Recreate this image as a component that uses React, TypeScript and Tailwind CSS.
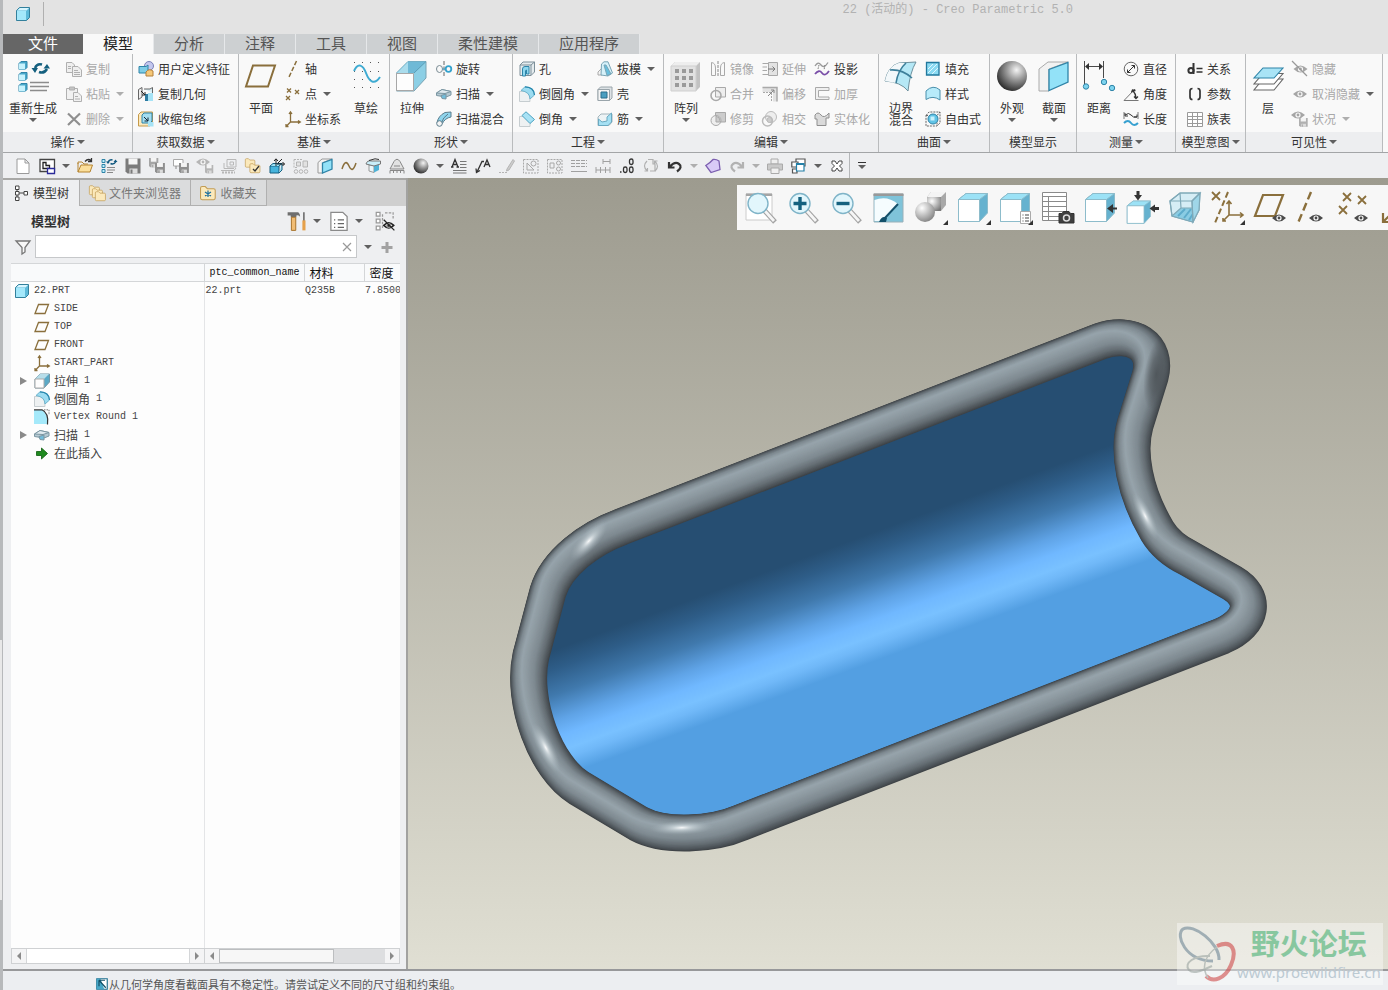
import React from "react";
import clsx from "clsx";

const BLUE = "#2f84a8";
const SKY = "#a6e3f6";
const GOLD = "#8a6f3c";
const GREY = "#a9a9a9";
const DARK = "#4a4a4a";

const eye = (x: number, y: number, color: string) => (
    <g transform={`translate(${x} ${y})`}>
        <path d="M-7 0Q0 -7 7 0Q0 7 -7 0Z" fill={color} />
        <circle r="2.6" fill="#f8f8f8" />
        <circle r="1.4" fill={color} />
    </g>
);

const floppy = (x: number, y: number, s: number, color: string) => (
    <g transform={`translate(${x} ${y}) scale(${s})`}>
        <path d="M0 0H15V15H2L0 13Z" fill={color} />
        <path d="M3 0H12V6H3Z" fill="#f4f4f4" />
        <path d="M4 10H12V15H4Z" fill="#dcdcdc" />
        <path d="M5 11H7V15H5Z" fill={color} />
    </g>
);

const folder = (x: number, y: number, s: number) => (
    <path transform={`translate(${x} ${y}) scale(${s})`} d="M.5 2.5Q.5 1 2 1H5L7 3H13Q14.500 3 14.500 4.500V12Q14.500 13.500 13 13.500H2Q.5 13.500 .5 12Z" fill="#fbe9bb" stroke="#c29c55" />
);

const cross = (x: number, y: number, r: number) => (
    <path d={`M${x - r} ${y - r}l${2 * r} ${2 * r}M${x + r} ${y - r}l${-2 * r} ${2 * r}`} stroke={GOLD} strokeWidth={r > 3 ? 1.8 : 1.3} />
);

// 16 x 16 drawings
const small: Record<string, React.ReactNode> = {
    cube: <g stroke="#33809c"><path d="M1.500 4.500L4.500 1.500H14.500V11.500L11.500 14.500H1.500Z" fill="#5db9d9" /><path d="M2 5H11V14H2Z" fill="#a4e8fb" stroke="none" /><path d="M2 4.500L5 2H14L11.500 4.500Z" fill="#d7f6ff" stroke="none" /></g>,
    copy: <g stroke="#b0b0b0" fill="#efefef"><path d="M.5 1.500H6L8.500 4V11.500H.5Z" /><path d="M6.500 5.500H12L15.500 9V15.500H6.500Z" /><path d="M8 9.500H12M8 11.500H14M8 13.500H14M2 5.500H5M2 7.500H5" /></g>,
    paste: <g stroke="#b0b0b0" fill="#f1f1f1"><path d="M.5 2.500H11.500V13.500H.5Z" /><path d="M3.500 1H8.500V4H3.500Z" fill="#c4c4c4" /><path d="M7.500 6.500H12L15.500 10V15.500H7.500Z" /><path d="M9 10.500H12M9 13H14" /></g>,
    remove: <path d="M2 2.500L14 14M14 2.500L2 14" stroke="#8f8f8f" strokeWidth="2.200" fill="none" />,
    udf: <g><circle cx="11" cy="5" r="4.500" fill="#c3c7ee" stroke="#7b82b8" /><path d="M1 5.500H8L10 4V10L8 12H1Z" fill="#7fcde6" stroke={BLUE} /><path d="M8 15V11Q11 7 15 10V15Z" fill="#f6c878" stroke="#b5803a" /></g>,
    copygeom: <g><path d="M.5 3.500L4 1.500V11L.5 13.500Z" stroke="#666" fill="#eee" /><path d="M6 3H12L14.500 1.500V7" fill="#d7eef5" stroke="#666" /><path d="M7 8H10V15H7Z" fill="#2d7ba1" /><path d="M10 7H15V15H10Z" fill={SKY} /><path d="M3 5L7 9M7 6V9H4" stroke="#222" fill="none" /></g>,
    shrink: <g><path d="M.5 3.500L3 1H14.500V12L12 15H.5Z" fill="#fbe9be" stroke="#c59a4a" /><path d="M4 4L6 2H14V10L12 12H4Z" fill="#a4def0" stroke={BLUE} /><path d="M6 6L10 10M10 6.500V10H6.500" stroke="#123" fill="none" /><path d="M10 11H15.500V15.500H10Z" fill={SKY} /></g>,
    axis: <path d="M11.500 0L4 16" stroke={GOLD} strokeWidth="1.500" strokeDasharray="4.500 2" fill="none" />,
    points: <g>{cross(4, 4.500, 2)}{cross(12, 6, 2)}{cross(3, 12, 2)}</g>,
    csys: <path d="M5.500 1V11H15M5.500 11L1 15.500M4 3L5.500 .8L7 3M13 9.500L15.300 11L13 12.500M1 13V15.500H3.500" stroke={GOLD} strokeWidth="1.300" fill="none" />,
    revolve: <g fill="none"><ellipse cx="3.500" cy="8" rx="3" ry="3.500" stroke="#7a8b93" /><circle cx="12.500" cy="8" r="2.800" stroke="#35a2cd" strokeWidth="1.800" /><path d="M8 0V16" stroke="#666" strokeDasharray="4 1.500" /><path d="M6.500 8H9.500" stroke="#35a2cd" /></g>,
    sweep: <g stroke="#7b96a2"><path d="M.5 7L6 3.500L15 5.500V9L10 11L.5 9.500Z" fill="#b5c9d2" /><path d="M.5 7L6 3.500L15 5.500L9 7.500Z" fill="#dfeaef" /><path d="M5 9.500L10 8V13L6 12.500Z" fill="#72bddb" /></g>,
    sweepblend: <g stroke="#5c7d8c"><path d="M1 12Q2 5 9 1.500L15 1V6Q9 7 6 13Z" fill="#8ed4ec" /><path d="M5 13Q7 6 12 3" fill="none" /><ellipse cx="3.500" cy="12.500" rx="2.800" ry="2.800" fill="#f4f4f4" /></g>,
    hole: <g stroke="#7c8f99"><path d="M1 4L4 1H15.500V11L12 14.500H1Z" fill="#e4ebee" /><path d="M12 4V14.500M1 4H12L15.500 1" fill="none" /><path d="M3.500 15V8Q3.500 5.500 6 5.500H10V13H7.500V9Q6.500 9 6.500 10V15Z" fill="#8fd8ef" stroke={BLUE} /></g>,
    round: <g><path d="M.5 5.500L6 5Q11 6 11 15.500H.5Z" fill="#eef1f2" stroke="#c6cdd0" /><path d="M6 .8Q15 1 15.500 9L11 13Q11 6 2 4.500Z" fill="#9cdcf1" stroke="#6db3cc" /><path d="M6 .8Q15 1 15.500 9" fill="none" stroke="#2888ae" strokeWidth="1.300" /></g>,
    chamfer: <g><path d="M.5 5.500H6L11 10V15.500H.5Z" fill="#eef1f2" stroke="#c6cdd0" /><path d="M7 .8L15.500 8.500L11 12.500L3 4.500Z" fill="#a8e2f5" stroke="#4ca3c2" /></g>,
    draft: <g stroke="#7aa5b6"><path d="M1 11L5 7V14H1Z" fill="#f3f3f3" stroke="#aaa" /><path d="M4.500 3L7 .8H11L15.500 12L11 15L4 14Z" fill="#d6f1f9" /><path d="M7 4H9L14 13L10 14.500Z" fill="#66bfde" /></g>,
    shell: <g stroke="#9aa5ab"><path d="M1 3.500L3.500 1H15V12L12.500 14.500H1Z" fill="#dde2e5" /><path d="M1 3.500H12.500V14.500H1Z" fill="#f5f5f5" /><path d="M4 6H10V12H4Z" fill="#4a9ec0" stroke="#2b6f8c" /></g>,
    rib: <g stroke="#6aa9c1"><path d="M1 6L4 3H15V11L12 14.500H1Z" fill="#edf3f5" stroke="#a3b4bb" /><path d="M1.500 8V14.500H11L14.500 11V2L10 6V10L5 11Z" fill="#a5e0f3" /></g>,
    mirror: <g fill="none" stroke={GREY}><path d="M1.500 1.500Q5.500 2 5.500 7V14.500H1.500Z" /><path d="M14.500 1.500Q10.500 2 10.500 7V14.500H14.500Z" /><path d="M8 0V16" stroke="#888" strokeDasharray="3 1" /></g>,
    merge: <g stroke={GREY} fill="#eee"><path d="M5.500 1.500H15.500V11H5.500Z" /><circle cx="6" cy="9.500" r="5" fill="none" strokeWidth="1.600" /></g>,
    trim: <g stroke={GREY}><path d="M5.500 1.500H15.500V11H5.500Z" fill="#ccc" /><circle cx="6" cy="9.500" r="5" fill="#eee" /><path d="M6 5Q10 6 10.500 11H6Z" fill="#ccc" /></g>,
    extend: <g stroke={GREY}><path d="M.5 2.500H6M.5 6H5M.5 9.500H5M.5 13.500H6" /><path d="M6.500 1.500H15.500V14.500H6.500Z" fill="#e3e3e3" /><path d="M6 8H13M10.500 5.500L13 8L10.500 10.500" stroke="#777" fill="none" /></g>,
    offset: <g stroke={GREY} fill="none"><path d="M.5 1.500H15V15.500H11V6H.5Z" fill="#e2e2e2" stroke="none" /><path d="M.5 1.500H15V15.500" strokeWidth="1.500" /><path d="M1 6.500H9.500V15" strokeDasharray="2 1" /><path d="M6 10L12 4M9 4H12V7" stroke="#888" /></g>,
    intersect: <g stroke="#bbb"><circle cx="9" cy="6" r="5.500" fill="#eee" /><circle cx="5.500" cy="10" r="5" fill="none" strokeWidth="1.500" /><circle cx="7.500" cy="9" r="2.500" fill="#ccc" /></g>,
    project: <g fill="none"><path d="M1 5Q4 0 7 4T14 1.500" stroke="#999" strokeWidth="1.300" /><path d="M1 13Q5 8 8 12T15 10" stroke="#7a4fa8" strokeWidth="1.800" /><path d="M5 4L4 8M11 4L10 9" stroke="#777" strokeDasharray="1.500 1" /></g>,
    thicken: <path d="M15 1.500H1.500V13.500H15V11H4.500V4.500H15Z" fill="#f0f0f0" stroke={GREY} />,
    solidify: <path d="M1 4Q4 0 7 4T15 2V7H12V14.500H3V8H1Z" fill="#dadada" stroke="#8f8f8f" />,
    fill: <g><path d="M1.500 1.500H14V14H1.500Z" fill="#8bdaf2" stroke="#22789d" strokeWidth="1.300" /><path d="M3 12L12 3M3 8L8 3M7 13L13 7" stroke="#dff7ff" /></g>,
    style: <path d="M1 5Q8 -2 15 4V14Q8 9 1 13.500Z" fill="#b7ebfa" stroke="#4a8fab" />,
    freestyle: <g fill="none"><path d="M1 4.500L4 1H15V12L12 15H1ZM1 4.500H12V15M12 4.500L15 1" stroke="#666" strokeDasharray="2 1" /><circle cx="8" cy="8" r="5" fill="#62c4e6" stroke={BLUE} /><path d="M5.500 5.500H9.500V9.500H5.500Z" fill="#c8f1fc" /></g>,
    diameter: <g fill="none" stroke="#666"><circle cx="8" cy="8" r="6.800" /><path d="M4.500 11.500L11.500 4.500M8.500 4.500H11.500V7.500M4.500 8.500V11.500H7.500" stroke="#333" /></g>,
    angle: <g fill="none" stroke="#777"><path d="M15.500 14.500H1L12 3" /><path d="M9.500 4Q13 8 13 12M8.500 6.500L9.500 4L12.500 4.500M11 10.500L13 12.500L15 10.500" stroke="#333" strokeWidth="1.300" /></g>,
    length: <g fill="none"><path d="M1 1V8M15 1V8" stroke="#777" /><path d="M2 4Q6 1 8 4T14 6M2 2V5H5M14 3.500V6H11" stroke="#333" /><path d="M1 12Q5 8 8 12T15 12" stroke="#36a0d0" strokeWidth="2" /></g>,
    relation: <g fill="none" stroke="#333" strokeWidth="2"><path d="M6.500 2V13" /><circle cx="4" cy="9.500" r="2.600" /><path d="M9.500 7.500H15.500M9.500 11H15.500" strokeWidth="1.500" /></g>,
    params: <path d="M5.500 2.500Q3 2.500 3 5V11Q3 13.500 5.500 13.500M10.500 2.500Q13 2.500 13 5V11Q13 13.500 10.500 13.500" fill="none" stroke="#333" strokeWidth="1.700" />,
    family: <g fill="none" stroke="#9a9a9a"><path d="M.5 1.500H15.500V15.500H.5Z" fill="#fff" /><path d="M.5 5.500H15.500M.5 8.500H15.500M.5 12.500H15.500M5.500 1.500V15.500M10.500 1.500V15.500" /></g>,
    hide: <g>{eye(8.500, 8, "#a5a5a5")}<path d="M0 0L15 15" stroke="#999" strokeWidth="1.300" /></g>,
    unhide: eye(8, 8, "#a5a5a5"),
    status: <g>{eye(6, 4, "#a5a5a5")}{floppy(7, 7, 0.58, "#b0b0b0")}</g>,
    newfile: <path d="M2 1H10L14 5V15.500H2ZM10 1V5H14" fill="#fff" stroke="#9a9a9a" />,
    window: <g fill="none" strokeWidth="1.300"><path d="M1 1.500H15.500V13.500H1Z" stroke="#444" fill="#fff" /><path d="M4 4.500H7V7.500H10.500V10.500H4Z" stroke="#222" /><path d="M8.500 10.500H15.500V15.500H8.500Z" stroke="#2b2b9a" fill="#fff" /></g>,
    open: <g><path d="M1 5V14H13L15.500 7H4L1 14" fill="#fbdf9c" stroke="#b58430" /><path d="M1 6V4H5L7 6H11" fill="none" stroke="#b58430" /><path d="M8 3.500Q11 0 14 2.500M14.500 0V3.500H11" fill="none" stroke="#333" strokeWidth="1.300" /></g>,
    regen: <g><path d="M1 1.500H4V4.500H1ZM1 6.500H4V9.500H1ZM1 11.500H4V14.500H1Z" fill="#bdeefb" stroke={BLUE} /><path d="M6 9.500H14M6 12H14M6 14.500H12" stroke="#888" /><path d="M7 4Q8.500 1 11.500 2M15 3.500Q13 7 9.500 5.500" fill="none" stroke="#135a80" strokeWidth="1.500" /><path d="M5 3.500H9L7 6ZM16.500 4H12.500L14.500 1.500Z" fill="#135a80" /></g>,
    save: floppy(0.5, 0.5, 1, "#7a7a7a"),
    saveas: <g>{floppy(0, 0, 0.62, "#a5a5a5")}{floppy(6, 5, 0.66, "#8f8f8f")}</g>,
    savecopy: <g><path d="M.5 1.500H10V8H.5Z" fill="#fff" stroke={GREY} /><path d="M3 8V11" stroke="#888" />{floppy(6, 5, 0.66, "#8f8f8f")}</g>,
    savestatus: <g>{eye(6, 4, "#b5b5b5")}{floppy(8, 7, 0.55, "#b5b5b5")}</g>,
    stamp: <g fill="none" stroke="#b8b8b8"><path d="M6 1.500H15V9H6ZM9 4H12.500V7H9ZM3 5V10.500H13" /><path d="M0 12.500H13L15 10" /><path d="M1 14.500H14" strokeWidth="2" strokeDasharray="2 1" /></g>,
    foldercheck: <g>{folder(0, 0, 0.68)}{folder(4.500, 5, 0.72)}<path d="M8 11L10 13L14 8" fill="none" stroke="#333" strokeWidth="1.300" /></g>,
    boxarrows: <g><path d="M1 8H10V15H1Z" fill="#46b4dc" stroke="#155f80" /><path d="M1 8L4 5.500H13L10 8M13 5.500V12L10 15" fill="#9be0f5" stroke="#155f80" /><path d="M7 8V1M5 3L7 .8L9 3M8 6H15.500M13.500 4L15.500 6L13.500 8M9 5L13 1" fill="none" stroke="#222" /></g>,
    greybox: <g fill="none" stroke="#b5b5b5"><path d="M1 1.500H10M1 1.500V9.500H4" strokeDasharray="2 1" /><path d="M3.500 4H7.500V8H3.500ZM10 3H14.500V9H10Z" fill="#e2e2e2" /><circle cx="3" cy="13.500" r="1.800" /><circle cx="8" cy="13.500" r="1.800" /><circle cx="13" cy="13.500" r="1.800" /></g>,
    section: <g stroke={BLUE}><path d="M1 4.500L5 1H15L6 4.500V15H1Z" fill="#f4f4f4" stroke="#999" /><path d="M5.500 5L15 1.500V11L5.500 15Z" fill="#93e2f8" strokeWidth="1.300" /></g>,
    curve: <path d="M1 11Q4.500 0 8 8T15 5" fill="none" stroke={GOLD} strokeWidth="1.500" />,
    cutbox: <g><path d="M4 7H9V14.500L4 13Z" fill="#e9f6fa" stroke="#999" /><path d="M9 7L14 5V12L9 14.500Z" fill="#4fb2d6" /><path d="M1 6Q2 2 7 3H15.500V6L9 8Z" fill="#c9eef9" stroke="#777" /><path d="M4 2.500L10 .8L14 1.500" stroke="#333" fill="none" /></g>,
    mass: <g stroke="#888"><path d="M5 3.500Q8 -1 11 3.500L15 11H1Z" fill="#e2e2e2" /><path d="M1 12.500H15V15.500M1 12.500V15.500M4.500 13V15M8 13V15M11.500 13V15" fill="none" /><path d="M5 8H11" /></g>,
    ball: <circle cx="8" cy="8" r="7.500" fill="url(#ballGrad)" />,
    note: <g><path d="M1 9L4 1.500L7 9M2 6.500H6M0 9H2.500M5.500 9H8" fill="none" stroke="#333" strokeWidth="1.300" /><path d="M9 3.500H15.500M9 6.500H15.500M9 9.500H15.500M2 12.500H15.500M2 15H15.500" stroke="#777" /></g>,
    leader: <g fill="none" stroke="#333" strokeWidth="1.300"><path d="M9 9L12 2L15 9M10 6.500H14" /><path d="M9 3.500H7L2 14M1 10.500L1.500 14.500L5 12.500" /></g>,
    pen: <g stroke="#b5b5b5"><path d="M0 14.500H9" strokeDasharray="2 1" /><path d="M8 11L14 1.500L15.500 3L10 12L7.500 13Z" fill="#ccc" /></g>,
    sketch1: <g fill="none" stroke="#a8a8a8"><path d="M.5 1.500H15V15H.5Z" strokeDasharray="2 1" /><path d="M4 5V12H11Z" /><circle cx="10.500" cy="5.500" r="2.500" /></g>,
    sketch2: <g fill="none" stroke="#a8a8a8"><path d="M.5 1.500H15V15H.5Z" strokeDasharray="2 1" /><path d="M3 5H7V10H3Z" /><circle cx="11.500" cy="5" r="2" /><circle cx="11.500" cy="11" r="2" /></g>,
    lines: <g stroke="#a0a0a0"><path d="M0 2.500H16M0 5.500H16M0 8.500H16" strokeDasharray="4 1" /><path d="M0 13.500H16" /></g>,
    dims: <path d="M1 9V15M5.500 9V15M10.500 9V15M15 9V15M1 12H15M8 1V6M15 1V6M8 3.500H15" fill="none" stroke="#a0a0a0" />,
    decimals: <g fill="none" stroke="#333" strokeWidth="1.300"><rect x="10.500" y="1" width="3.500" height="5.500" rx="1.700" /><rect x="4.500" y="9" width="3.500" height="5.500" rx="1.700" /><rect x="10.500" y="9" width="3.500" height="5.500" rx="1.700" /><path d="M1 14H2.500" /></g>,
    spin: <g fill="none" stroke="#b0b0b0" strokeWidth="1.200"><path d="M5 1.500H10V6H12V13H7" fill="#eee" /><path d="M4 3Q-1 8 4 12.500M12 3.500Q17 8 12 13M1.500 13H4.500V10M14.500 3H11.500V6" /></g>,
    undo: <path d="M3 8.500Q8 3 12 6T10 13.500M2 4V9.500H7.500" fill="none" stroke="#333" strokeWidth="2.200" />,
    redo: <path d="M13 8.500Q8 3 4 6T6 13.500M14 4V9.500H8.500" fill="none" stroke="#b2b2b2" strokeWidth="2.200" />,
    patch: <path d="M8 1.500Q11 1 14 3L15 11.500L6 14.500L.8 7.500Q5 5 8 1.500Z" fill="#d9cbf7" stroke="#7c5fb0" strokeWidth="1.300" />,
    printer: <g stroke="#aaa"><path d="M4 1H11V6H4Z" fill="#eee" /><path d="M.5 6H15.500V12H.5Z" fill="#c9c9c9" /><path d="M4 10H12V15.500H4Z" fill="#f0f0f0" /></g>,
    windows: <g fill="#fff" strokeWidth="1.200"><path d="M5 1H14V8H5Z" stroke="#555" /><path d="M.8 4H7V9H.8ZM1.500 11H6V15H1.500Z" stroke="#555" /><path d="M5.500 5.500H13V13H5.500Z" stroke="#2480a8" /><path d="M5.500 6H13" stroke="#2480a8" strokeWidth="2" /></g>,
    close: <path d="M3 3H6L8 6L10 3H13V5.500L10.500 8L13 10.500V13H10L8 10L6 13H3V10.500L5.500 8L3 5.500Z" fill="#fff" stroke="#444" />,
    tree: <g fill="none" stroke="#444"><path d="M2.500 1H6V4.500H2.500ZM2.500 6.500H6V10H2.500ZM2.500 12H6V15.500H2.500ZM11 6.500H14.500V10H11Z" fill="#fff" /><path d="M4 4.500V6.500M4 10V12M6 8H11" /></g>,
    hammer: <g><path d="M.5 1H9Q10.500 2 10.500 4.500Q9 3 7.500 3.500V5H3V3.500H.5Z" fill="#6f6f6f" /><path d="M3.500 5H7V15.500H3.500Z" fill="#f1bd74" stroke="#a8732c" strokeWidth=".8" /><path d="M13.500 1V8" stroke="#777" strokeWidth="1.400" /><path d="M12.300 7.500H14.800V15.500H12.300Z" fill="#e5a04a" /></g>,
    listdoc: <g fill="none" stroke="#8a8a8a"><path d="M1.500 1H11L14.500 4.500V15.500H1.500Z" fill="#fff" /><path d="M7 7H12M7 10H12M7 13H12M4 7H5M4 10H5M4 13H5" stroke="#666" /></g>,
    treehide: <g fill="none" stroke="#9a9a9a"><path d="M1 1H4V4H1ZM1 6.500H4V9.500H1ZM1 12H4V15H1Z" fill="#fff" /><path d="M8 1.500H14.500V7M6 2.500V14" strokeDasharray="2 1" /><path d="M7 11.500Q11 7.500 15 11.500Q11 15.500 7 11.500Z" fill="#fff" stroke="#222" strokeWidth="1.200" /><circle cx="11" cy="11.500" r="1.500" fill="#222" /><path d="M7 7L15.500 15.500" stroke="#222" /></g>,
    funnel: <path d="M1 2H15L10 8.500V13L7 15V8.500Z" fill="#f8f8f8" stroke="#777" strokeWidth="1.300" />,
    plus: <path d="M8 3V14M2.500 8.500H13.500" stroke="#a2a2a2" strokeWidth="3" />,
    folders: <g>{folder(0, 0, 0.72)}{folder(3, 3, 0.72)}{folder(6, 6, 0.72)}</g>,
    favorite: <g>{folder(0, 0.5, 1.05)}<path d="M8 5.500V12M5 7L11 11M11 7L5 11" stroke="#1b6fa0" strokeWidth="1.200" /></g>,
    plane: <path d="M4.500 3.500H14.500L11 12.500H1Z" fill="none" stroke={GOLD} strokeWidth="1.300" />,
    extrude: <g><path d="M1 6L6 1H15.500V9L10 15H1Z" fill="#5aa9c6" stroke="#7296a5" /><path d="M1 6L6 1H15L10 6Z" fill="#b7dde9" /><path d="M1 6H10V15H1Z" fill="#fdfdfd" stroke="#aaa" /></g>,
    vertex: <g><path d="M0 1H8Q14 4 13 15H0Z" fill="#a5e9fa" /><path d="M0 .8H8Q15 4 13.500 15.500" fill="none" stroke="#333" strokeWidth="1.200" /><path d="M10 .8H15V6" fill="none" stroke="#777" strokeDasharray="1.500 1" /></g>,
    insert: <path d="M2.500 6.500H7.500V3L13.500 8.500L7.500 14V10.500H2.500Z" fill="#1f8a1f" stroke="#0d5c0d" strokeWidth=".8" />,
    message: <g><path d="M1 1H15V15H1Z" fill="#fff" stroke="#1d6f8e" strokeWidth="1.500" /><path d="M1 1H6L11 15H1Z" fill="#46a6c6" /><path d="M4 3H12M4 3V11M4 3L13 13" stroke="#134f66" strokeWidth="1.600" fill="none" /></g>,
};

const magnifier = (
    <g><path d="M19.500 19.500L30 31" stroke="#a3a3a3" strokeWidth="5" /><path d="M20 20L29 30" stroke="#f6f6f6" strokeWidth="2.800" /><circle cx="13" cy="12.500" r="10" fill="#e2f6fc" stroke="#7fb4c8" strokeWidth="1.400" /></g>
);
const bigCube = (
    <g stroke="#8dbccb"><path d="M1.500 8.500L9 2.500H30.500V22L22.500 30.500H1.500Z" fill="#66b2cf" /><path d="M1.500 8.500L9 2.500H30.500L22.500 8.500Z" fill="#9ce2f6" /><path d="M1.500 8.500H22.500V30.500H1.500Z" fill="#fff" /></g>
);
const corner = <path d="M34 29V34H29Z" fill="#333" />;

// 34 x 34 drawings
const large: Record<string, React.ReactNode> = {
    regenerate: <g><path d="M3 3.500L5 1.500H11V7.500L9 9.500H3ZM3 14.500L5 12.500H11V18.500L9 20.500H3ZM3 25.500L5 23.500H11V29.500L9 31.500H3Z" fill="#48a9cb" stroke={BLUE} /><path d="M3 3.500H9V9.500H3ZM3 14.500H9V20.500H3ZM3 25.500H9V31.500H3Z" fill="#c6f2fd" /><path d="M14 22.500H33M14 26.500H33M14 30.500H31" stroke="#8c8c8c" strokeWidth="1.400" /><path d="M19 8Q21 3 26 4.500M31 9Q28 14 23 12" fill="none" stroke="#15607f" strokeWidth="2.500" /><path d="M15.500 8H22L19 13ZM34 8.500H27.500L31 4Z" fill="#15607f" /></g>,
    plane: <path d="M9 5.500H31L24 26.500H2Z" fill="none" stroke={GOLD} strokeWidth="2" />,
    sketch: <g><path d="M5 2.500H31M5 11.500H31M5 19.500H31M5 27.500H31" stroke="#555" strokeDasharray="1 7" /><path d="M5 11C9 2 14 5 17 13S25 26 31 17" fill="none" stroke="#3eabd2" strokeWidth="2" /></g>,
    extrude: <g><path d="M1.500 13L13 1.500H31V18L19 31H1.500Z" fill="#8ccfe5" stroke="#79a3b3" /><path d="M1.500 13L13 1.500H31L19 13Z" fill="#6fb9d6" /><path d="M13 2L13 13H2Z" fill="#aadcec" /><path d="M19 13L31 1.500" stroke="#5b9db6" /><path d="M1.500 13.500H18.500V30.500H1.500Z" fill="#fdfdfd" stroke="#a7a7a7" /></g>,
    pattern: <g><path d="M2 6L6 2H31V27L27 31H2Z" fill="#c2c2c2" /><path d="M2 6L6 2H31L27 6Z" fill="#eee" /><path d="M2 6H27V31H2Z" fill="#e2e2e2" stroke="#cfcfcf" />{[9, 16, 23].map((y) => [6, 13, 20].map((x) => <path key={`${x}-${y}`} d={`M${x} ${y}h4v4h-4z`} fill="#9a9a9a" />))}</g>,
    boundary: <g stroke="#6d909d"><path d="M1 21Q4 6 15 3L32 2Q26 12 24 31Q17 22 1 21Z" fill="#b5e8f6" /><path d="M1 21Q4 6 15 3L21 3Q14 9 12 23Z" fill="#f3f8fa" stroke="none" /><path d="M6 10Q18 9 28 18M22 3Q14 10 12 23" fill="none" stroke="#3d7f9a" strokeWidth="1.600" /></g>,
    appearance: <circle cx="17" cy="16" r="15" fill="url(#ballGrad)" />,
    section: <g><path d="M2 9L11 2H31L12 9V31H2Z" fill="#f2f2f2" stroke="#aaa" /><path d="M12 9.500L31 2.500V22L12 30.500Z" fill="#93e2f8" stroke={BLUE} strokeWidth="1.300" /></g>,
    distance: <g><path d="M2.500 1V24M21.500 1V18M4 6.500H20" stroke={DARK} /><path d="M7 3L3 6.500L7 10ZM17 3L21 6.500L17 10Z" fill="#333" /><g fill="#7dd3ee" stroke={BLUE}><circle cx="4" cy="26.500" r="2.700" /><circle cx="22" cy="22" r="2.700" /><circle cx="30" cy="28" r="2.700" /></g></g>,
    layer: <g stroke="#666" strokeWidth="1.100"><path d="M12 19H32L23 30H3Z" fill="#fff" /><path d="M12 13.500H32L23 24H3Z" fill="#fff" /><path d="M12 8H32L23 18H3Z" fill="#a9e4f6" stroke={BLUE} /></g>,
    refit: <g><path d="M1 3H27V29H1Z" fill="#fff" stroke="#ccc" /><path d="M1 2.500H27V5H1Z" fill="#a5a5a5" />{magnifier}</g>,
    zoomin: <g>{magnifier}<path d="M13 6V19M6.500 12.500H19.500" stroke="#14617f" strokeWidth="3.400" /></g>,
    zoomout: <g>{magnifier}<path d="M6.500 12.500H19.500" stroke="#14617f" strokeWidth="3.400" /></g>,
    repaint: <g><path d="M2 3H31V31H2Z" fill="#7fc3d9" stroke="#9ab0b8" /><path d="M1.500 2.500H31.500V5H1.500Z" fill="#999" /><path d="M2.500 9Q15 4 26 13L11 30H2.500Z" fill="#f5fcfe" /><path d="M26 13L12 28" stroke="#14506a" strokeWidth="2" /><path d="M7 31Q10 24 15 27L14 31Z" fill="#14506a" /></g>,
    displaystyle: <g><path d="M13 6L17 1H32V14L27 20H13Z" fill="#a8a8a8" /><path d="M13 6L17 1H32L27 6Z" fill="#f4f4f4" /><path d="M13 6H27V20H13Z" fill="url(#silverGrad)" /><circle cx="11" cy="21" r="10" fill="url(#silverGrad)" />{corner}</g>,
    orient: <g>{bigCube}{corner}</g>,
    viewmanager: <g>{bigCube}<path d="M21.500 20.500H31.500V32.500H21.500Z" fill="#fff" stroke="#aaa" /><path d="M23.500 24H24.500M26 24H30M23.500 27H24.500M26 27H30M23.500 30H24.500M26 30H30" stroke="#444" />{corner}</g>,
    camera: <g fill="none" stroke="#8a8a8a"><path d="M1.500 1.500H25.500V29.500H1.500Z" fill="#fff" /><path d="M1.500 5.500H25.500M1.500 10.500H25.500M1.500 15.500H25.500M1.500 20.500H25.500M1.500 25.500H25.500M7.500 5.500V29.500" /><path d="M18 22.500H21L22.500 20.500H28L29.500 22.500H33V32H18Z" fill="#3f3f3f" stroke="#333" /><circle cx="25.500" cy="27" r="3" stroke="#ddd" strokeWidth="1.500" /></g>,
    front: <g>{bigCube}<path d="M33 17.500H27" stroke="#333" strokeWidth="2" /><path d="M29 13L23 17.500L29 22Z" fill="#333" /></g>,
    topfront: <g><g transform="translate(0 8) scale(.8)">{bigCube}</g><path d="M12 0V5M33 17.500H28" stroke="#333" strokeWidth="3" /><path d="M8 4H16L12 9.500ZM29 13.500L23.500 17.500L29 21.500Z" fill="#333" /></g>,
    perspective: <g stroke="#7fa9b8" strokeWidth="1.200"><path d="M2 10L12 2H32L31 19L25 31L4 25Z" fill="#d6edf5" /><path d="M4 25L13 17H31L25 31Z" fill="#8accE3" stroke="none" /><path d="M10 25L17 18M16 27L23 18M21 29L28 18" stroke="#5eaccb" strokeWidth="2" /><path d="M24 10L32 2L31 19L25 31Z" fill="#9fd6e8" /><path d="M12 2L13 17L4 25M13 17H24M2 10L4 25L25 31L24 10ZL12 2H32L24 10" fill="none" /></g>,
    datumall: <g fill="none" stroke={GOLD} strokeWidth="1.600">{cross(5, 5, 4)}<path d="M17 1L4 32" strokeDasharray="6 3" strokeWidth="2" /><path d="M18 11V24H31M18 24L12 30M15.500 13L18 10L20.500 13M29 21.500L32 24L29 26.500M12 27V30H15" /><path d="M34 29V34H29Z" fill="#333" stroke="none" /></g>,
    planevis: <g><path d="M10 4H30L22 25H2Z" fill="none" stroke={GOLD} strokeWidth="2.200" />{eye(26, 27, "#4a4a4a")}</g>,
    axisvis: <g><path d="M16 1L3 32" stroke={GOLD} strokeWidth="2.400" strokeDasharray="8 4" />{eye(21, 27, "#4a4a4a")}</g>,
    pointvis: <g>{cross(9, 6, 4)}{cross(24, 9, 4)}{cross(5, 19, 4)}{eye(23, 27, "#4a4a4a")}</g>,
    csysvis: <path d="M22 1V12L3 31M3 22V31H12" fill="none" stroke={GOLD} strokeWidth="2.200" />,
};

function Icon({ name, big = false }: { name: string; big?: boolean }) {
    return (
        <svg
            viewBox={big ? "0 0 34 34" : "0 0 16 16"}
            className={clsx("shrink-0 overflow-visible", big ? "size-[34px]" : "size-4")}
            fill="none"
            aria-hidden="true"
        >
            {big ? large[name] : small[name]}
        </svg>
    );
}

function Arrow({ muted = false }: { muted?: boolean }) {
    return (
        <svg viewBox="0 0 8 4" className={clsx("w-2 h-1 shrink-0", muted ? "text-[#aeaeae]" : "text-[#606060]")} aria-hidden="true">
            <path d="M0 0H8L4 4Z" fill="currentColor" />
        </svg>
    );
}

type Tool = { icon: string; label: string; off?: boolean; menu?: boolean; menuOn?: boolean };

function BigTool({ icon, label, menu, className = "w-11" }: Tool & { className?: string }) {
    return (
        <button type="button" className={clsx("flex flex-col items-center shrink-0 pt-1", className)}>
            <Icon name={icon} big />
            <span className="mt-2 leading-3 text-center whitespace-pre-line">{label}</span>
            {menu && <span className="mt-1 flex"><Arrow /></span>}
        </button>
    );
}

function ToolColumn({ tools, className }: { tools: Tool[]; className?: string }) {
    return (
        <div className={clsx("flex flex-col shrink-0", className)}>
            {tools.map((t) => (
                <button key={t.label} type="button" className={clsx("h-[25px] flex items-center gap-1 whitespace-nowrap", t.off && "text-[#a8a8a8]")}>
                    <Icon name={t.icon} />
                    <span>{t.label}</span>
                    {t.menu && <span className="ml-0.5 flex"><Arrow muted={t.off && !t.menuOn} /></span>}
                </button>
            ))}
        </div>
    );
}

function Group({ label, menu = true, className, children }: { label: string; menu?: boolean; className: string; children: React.ReactNode }) {
    return (
        <section className={clsx("shrink-0 flex flex-col border-r border-[#b9bbbd]", className)}>
            <div className="h-[78px] flex pt-0.5">{children}</div>
            <button type="button" className="h-5 bg-[#edeef0] flex items-center justify-center gap-0.5 whitespace-nowrap">
                {label}
                {menu && <Arrow />}
            </button>
        </section>
    );
}

const tabs = ["分析", "注释", "工具", "视图", "柔性建模", "应用程序"];

function RibbonTabs() {
    return (
        <nav className="h-5 flex text-[15px] leading-[18px] text-[#555]">
            <button type="button" className="w-20 bg-[#666] text-white flex justify-center">文件</button>
            <button type="button" className="px-5 bg-[#f9f9f9] text-[#222] border-r border-[#e6e8ea] flex">模型</button>
            {tabs.map((t) => (
                <button key={t} type="button" className="px-5 bg-[#cdd0d2] border-r border-[#e6e8ea] flex">{t}</button>
            ))}
        </nav>
    );
}

function Ribbon() {
    return (
        <div className="flex bg-[#f9f9f9] border-b border-[#a3a5a7] text-xs text-[#333] overflow-hidden">
            <Group label="操作" className="w-[130px]">
                <BigTool icon="regenerate" label="重新生成" menu className="w-[60px]" />
                <ToolColumn className="pl-[3px]" tools={[
                    { icon: "copy", label: "复制", off: true },
                    { icon: "paste", label: "粘贴", off: true, menu: true },
                    { icon: "remove", label: "删除", off: true, menu: true },
                ]} />
            </Group>
            <Group label="获取数据" className="w-[106px]">
                <ToolColumn className="pl-[5px]" tools={[
                    { icon: "udf", label: "用户定义特征" },
                    { icon: "copygeom", label: "复制几何" },
                    { icon: "shrink", label: "收缩包络" },
                ]} />
            </Group>
            <Group label="基准" className="w-[151px]">
                <BigTool icon="plane" label="平面" />
                <ToolColumn className="w-[59px] pl-0.5" tools={[
                    { icon: "axis", label: "轴" },
                    { icon: "points", label: "点", menu: true },
                    { icon: "csys", label: "坐标系" },
                ]} />
                <BigTool icon="sketch" label="草绘" className="w-12" />
            </Group>
            <Group label="形状" className="w-[123px]">
                <BigTool icon="extrude" label="拉伸" />
                <ToolColumn className="pl-0.5" tools={[
                    { icon: "revolve", label: "旋转" },
                    { icon: "sweep", label: "扫描", menu: true },
                    { icon: "sweepblend", label: "扫描混合" },
                ]} />
            </Group>
            <Group label="工程" className="w-[151px]">
                <ToolColumn className="w-[84px] pl-1.5" tools={[
                    { icon: "hole", label: "孔" },
                    { icon: "round", label: "倒圆角", menu: true },
                    { icon: "chamfer", label: "倒角", menu: true },
                ]} />
                <ToolColumn tools={[
                    { icon: "draft", label: "拔模", menu: true },
                    { icon: "shell", label: "壳" },
                    { icon: "rib", label: "筋", menu: true },
                ]} />
            </Group>
            <Group label="编辑" className="w-[215px]">
                <BigTool icon="pattern" label="阵列" menu />
                <ToolColumn className="w-[54px] pl-0.5" tools={[
                    { icon: "mirror", label: "镜像", off: true },
                    { icon: "merge", label: "合并", off: true },
                    { icon: "trim", label: "修剪", off: true },
                ]} />
                <ToolColumn className="w-[52px]" tools={[
                    { icon: "extend", label: "延伸", off: true },
                    { icon: "offset", label: "偏移", off: true },
                    { icon: "intersect", label: "相交", off: true },
                ]} />
                <ToolColumn tools={[
                    { icon: "project", label: "投影" },
                    { icon: "thicken", label: "加厚", off: true },
                    { icon: "solidify", label: "实体化", off: true },
                ]} />
            </Group>
            <Group label="曲面" className="w-[111px]">
                <BigTool icon="boundary" label={"边界\n混合"} />
                <ToolColumn className="pl-0.5" tools={[
                    { icon: "fill", label: "填充" },
                    { icon: "style", label: "样式" },
                    { icon: "freestyle", label: "自由式" },
                ]} />
            </Group>
            <Group label="模型显示" menu={false} className="w-[87px]">
                <BigTool icon="appearance" label="外观" menu />
                <BigTool icon="section" label="截面" menu className="w-10" />
            </Group>
            <Group label="测量" className="w-[99px]">
                <BigTool icon="distance" label="距离" />
                <ToolColumn className="pl-0.5" tools={[
                    { icon: "diameter", label: "直径" },
                    { icon: "angle", label: "角度" },
                    { icon: "length", label: "长度" },
                ]} />
            </Group>
            <Group label="模型意图" className="w-[70px]">
                <ToolColumn className="pl-[11px]" tools={[
                    { icon: "relation", label: "关系" },
                    { icon: "params", label: "参数" },
                    { icon: "family", label: "族表" },
                ]} />
            </Group>
            <Group label="可见性" className="w-[137px]">
                <BigTool icon="layer" label="层" />
                <ToolColumn className="pl-0.5" tools={[
                    { icon: "hide", label: "隐藏", off: true },
                    { icon: "unhide", label: "取消隐藏", off: true, menu: true, menuOn: true },
                    { icon: "status", label: "状况", off: true, menu: true },
                ]} />
            </Group>
        </div>
    );
}

// "v" is a drop-down arrow, "w" a greyed one
const quick = [
    "newfile", "window", "v", "open", "regen", "save", "saveas", "savecopy", "savestatus", "stamp", "foldercheck",
    "boxarrows", "greybox", "section", "curve", "cutbox", "mass", "ball", "v", "note", "leader", "pen", "sketch1",
    "sketch2", "lines", "dims", "decimals", "spin", "undo", "w", "patch", "redo", "w", "printer", "windows", "v", "close",
];

function QuickBar() {
    return (
        <div className="h-[25px] flex items-center pl-2 bg-[#eeeff1]">
            {quick.map((q, i) =>
                q === "v" || q === "w" ? (
                    <button key={i} type="button" aria-label="更多" className="w-3.5 flex items-center justify-center">
                        <Arrow muted={q === "w"} />
                    </button>
                ) : (
                    <button key={i} type="button" aria-label={q} className="w-6 flex items-center justify-center">
                        <Icon name={q} />
                    </button>
                )
            )}
            <span className="h-full w-px bg-[#b5b7b9]" />
            <button type="button" aria-label="自定义" className="w-6 flex flex-col items-center gap-0.5">
                <span className="w-2 h-px bg-[#333]" />
                <Arrow />
            </button>
        </div>
    );
}

type Node = { icon: string; name: string; suffix?: string; latin?: boolean; open?: boolean };

const nodes: Node[] = [
    { icon: "plane", name: "SIDE", latin: true },
    { icon: "plane", name: "TOP", latin: true },
    { icon: "plane", name: "FRONT", latin: true },
    { icon: "csys", name: "START_PART", latin: true },
    { icon: "extrude", name: "拉伸", suffix: " 1", open: true },
    { icon: "round", name: "倒圆角", suffix: " 1" },
    { icon: "vertex", name: "Vertex Round 1", latin: true },
    { icon: "sweep", name: "扫描", suffix: " 1", open: true },
    { icon: "insert", name: "在此插入" },
];

const mono = "font-['Liberation_Mono','Noto_Sans_CJK_SC',monospace] text-[10px]";

function TreeTable() {
    return (
        <table className="w-full h-full table-fixed border-collapse text-xs text-[#444]">
            <colgroup>
                <col className="w-[193px]" />
                <col className="w-[100px]" />
                <col className="w-[60px]" />
                <col />
            </colgroup>
            <thead>
                <tr className="h-[18px] border-y border-[#d4d6d8] text-left text-[#111] bg-[#f9fafb]">
                    <th aria-label="名称" className="border-r border-[#d4d6d8]" />
                    <th className={clsx(mono, "p-0 pl-[5px] border-r border-[#d4d6d8] font-normal leading-4 whitespace-nowrap")}>ptc_common_name</th>
                    <th className="p-0 pl-[5px] border-r border-[#d4d6d8] font-normal leading-4">材料</th>
                    <th className="p-0 pl-[5px] font-normal leading-4 whitespace-nowrap">密度</th>
                </tr>
            </thead>
            <tbody className="leading-[18px]">
                <tr className="h-[18px]">
                    <td className="p-0 border-r border-[#e4e5e7]">
                        <div className="h-[18px] pl-[3px] flex items-center gap-1">
                            <Icon name="cube" />
                            <span className={mono}>22.PRT</span>
                        </div>
                    </td>
                    <td className={clsx(mono, "p-0 pl-px leading-[18px]")}>22.prt</td>
                    <td className={clsx(mono, "p-0 pl-px leading-[18px]")}>Q235B</td>
                    <td className={clsx(mono, "p-0 pl-px leading-[18px] overflow-hidden whitespace-nowrap")}>7.85000</td>
                </tr>
                {nodes.map((n) => (
                    <tr key={n.name} className="h-[18px]">
                        <td className="p-0 border-r border-[#e4e5e7]">
                            <div className="h-[18px] flex items-center">
                                <span className="w-[23px] pl-[9px] flex">
                                    {n.open && (
                                        <svg viewBox="0 0 7 8" className="w-[7px] h-2" aria-hidden="true"><path d="M0 0L7 4L0 8Z" fill="#8a8a8a" /></svg>
                                    )}
                                </span>
                                <Icon name={n.icon} />
                                <span className={clsx("ml-1", n.latin && mono)}>{n.name}</span>
                                {n.suffix && <span className={clsx(mono, "whitespace-pre")}>{n.suffix}</span>}
                            </div>
                        </td>
                        <td colSpan={3} className="p-0" />
                    </tr>
                ))}
                <tr>
                    <td className="border-r border-[#e4e5e7]" />
                    <td colSpan={3} />
                </tr>
            </tbody>
        </table>
    );
}

function ScrollButton({ dir, label }: { dir: "left" | "right"; label: string }) {
    return (
        <button type="button" aria-label={label} className="w-3.5 shrink-0 flex items-center justify-center bg-[#f4f4f5]">
            <svg viewBox="0 0 4 8" className="w-1 h-2" aria-hidden="true">
                <path d={dir === "left" ? "M4 0V8L0 4Z" : "M0 0V8L4 4Z"} fill="#8a8a8a" />
            </svg>
        </button>
    );
}

function ModelTree() {
    return (
        <aside className="w-[405px] shrink-0 flex flex-col bg-[#eeeff1] border-r-2 border-[#a2a2a0] text-xs text-[#333]">
            <div className="h-7 flex bg-[#cfcfcf] border-t-2 border-[#a8a8a6] text-[#777]">
                <button type="button" className="w-[76px] flex items-center justify-center gap-1 bg-[#eeeff1] text-[#333]">
                    <Icon name="tree" />模型树
                </button>
                <button type="button" className="w-28 flex items-center justify-center gap-1 bg-[#dbdcdd] border border-t-0 border-[#b0b0b0]">
                    <Icon name="folders" />文件夹浏览器
                </button>
                <button type="button" className="w-[76px] flex items-center justify-center gap-1 bg-[#dbdcdd] border border-l-0 border-t-0 border-[#b0b0b0]">
                    <Icon name="favorite" />收藏夹
                </button>
            </div>
            <div className="h-[29px] flex items-center pl-7 pr-[11px]">
                <h2 className="flex-1 text-[13px] font-bold">模型树</h2>
                <button type="button" aria-label="设置" className="flex items-center gap-1.5 [&>svg:first-child]:size-5"><Icon name="hammer" /><Arrow /></button>
                <button type="button" aria-label="显示" className="ml-2 flex items-center gap-1.5 [&>svg:first-child]:size-5"><Icon name="listdoc" /><Arrow /></button>
                <button type="button" aria-label="隐藏树" className="ml-3 [&>svg]:size-5"><Icon name="treehide" /></button>
            </div>
            <div className="h-[23px] flex items-center pl-3 pr-[11px]">
                <Icon name="funnel" />
                <div className="ml-1 h-full flex-1 flex items-center bg-white border border-[#c6c8ca] pr-1">
                    <input type="text" aria-label="过滤" className="flex-1 min-w-0 h-full px-1 outline-none" />
                    <button type="button" aria-label="清除">
                        <svg viewBox="0 0 10 10" className="size-2.5" aria-hidden="true"><path d="M1 1L9 9M9 1L1 9" stroke="#999" strokeWidth="1.200" /></svg>
                    </button>
                </div>
                <button type="button" aria-label="过滤选项" className="w-[22px] flex justify-center"><Arrow /></button>
                <button type="button" aria-label="添加"><Icon name="plus" /></button>
            </div>
            <div className="mt-[5px] ml-2 mr-1.5 flex-1 grid bg-[#fdfdfd]">
                <TreeTable />
            </div>
            <div className="h-4 ml-2 mr-1.5 mb-[5px] flex border border-[#cfd1d3]">
                <div className="w-[193px] shrink-0 flex border-r border-[#cfd1d3]">
                    <ScrollButton dir="left" label="向左" />
                    <div className="flex-1 bg-white border-x border-[#d4d6d8]" />
                    <ScrollButton dir="right" label="向右" />
                </div>
                <ScrollButton dir="left" label="列向左" />
                <div className="flex-1 flex bg-[#dddee0]">
                    <div className="w-[69%] bg-[#f7f7f7] border border-[#bcbec0]" />
                </div>
                <ScrollButton dir="right" label="列向右" />
            </div>
        </aside>
    );
}

const views = [
    "refit", "zoomin", "zoomout", "repaint", "displaystyle", "orient", "viewmanager", "camera",
    "front", "topfront", "perspective", "datumall", "planevis", "axisvis", "pointvis", "csysvis",
];

const rim = "M620 527L1100 341C1132 330 1158 346 1150 376L1135 424C1127 452 1134 492 1157 531C1166 546 1178 553 1188 558L1232 583C1256 597 1254 622 1222 636L740 823C712 835 664 838 638 824L578 788C545 768 520 702 530 656L547 592C556 562 590 538 620 527Z";

// the tube is built from ever narrower strokes that drift towards the light
const ramp: [number, number[]][] = [
    [0, [62, 67, 71]],
    [0.06, [74, 80, 85]],
    [0.25, [101, 110, 116]],
    [0.5, [127, 138, 145]],
    [0.8, [143, 155, 162]],
    [1, [151, 164, 172]],
];

function shade(t: number) {
    const i = Math.max(1, ramp.findIndex(([p]) => p >= t));
    const [p0, a] = ramp[i - 1];
    const [p1, b] = ramp[i];
    const k = (t - p0) / (p1 - p0);
    return `rgb(${a.map((v, n) => Math.round(v + (b[n] - v) * k)).join(",")})`;
}

const glints = [
    { x: 588, y: 541, rx: 26, ry: 9, r: -47 },
    { x: 545, y: 748, rx: 28, ry: 8, r: 63 },
    { x: 681, y: 828, rx: 32, ry: 7, r: -2 },
    { x: 1145, y: 516, rx: 26, ry: 7, r: 64 },
];

function Model() {
    const steps = Array.from({ length: 36 }, (_, i) => i / 36);
    return (
        <svg viewBox="407 178 981 791" preserveAspectRatio="xMidYMid meet" className="w-full h-full" role="img" aria-label="22.PRT">
            <defs>
                <linearGradient id="trough" gradientUnits="userSpaceOnUse" x1="890" y1="526" x2="932" y2="640">
                    <stop offset="0" stopColor="#264e72" />
                    <stop offset=".15" stopColor="#2e5d88" />
                    <stop offset=".35" stopColor="#4079ad" />
                    <stop offset=".55" stopColor="#5fa3e6" />
                    <stop offset=".68" stopColor="#70b8ff" />
                    <stop offset=".8" stopColor="#79c1ff" />
                    <stop offset=".87" stopColor="#70b8f8" />
                    <stop offset="1" stopColor="#539fe2" />
                </linearGradient>
                <radialGradient id="glint">
                    <stop offset="0" stopColor="#fff" stopOpacity=".95" />
                    <stop offset=".3" stopColor="#dfe8ec" stopOpacity=".6" />
                    <stop offset="1" stopColor="#a5b3ba" stopOpacity="0" />
                </radialGradient>
                <radialGradient id="dusk">
                    <stop offset="0" stopColor="#42474b" stopOpacity=".75" />
                    <stop offset=".5" stopColor="#42474b" stopOpacity=".5" />
                    <stop offset="1" stopColor="#42474b" stopOpacity="0" />
                </radialGradient>
            </defs>
            <path d={rim} fill="url(#trough)" />
            {steps.map((t) => (
                <path
                    key={t}
                    d={rim}
                    fill="none"
                    stroke={shade(t)}
                    strokeWidth={37 * (1 - t)}
                    strokeLinejoin="round"
                    transform={`translate(${-7 * t} ${-7 * t})`}
                />
            ))}
            <ellipse cx="1156" cy="374" rx="12" ry="36" transform="rotate(8 1156 374)" fill="url(#dusk)" />
            {glints.map((g) => (
                <ellipse key={g.x} cx={g.x} cy={g.y} rx={g.rx} ry={g.ry} transform={`rotate(${g.r} ${g.x} ${g.y})`} fill="url(#glint)" />
            ))}
        </svg>
    );
}

function Viewport() {
    return (
        <main className="relative flex-1 min-w-0 overflow-hidden bg-linear-to-b from-[#9d9b8f] to-[#e0dfd3]">
            <Model />
            <div className="absolute top-[7px] right-0 left-[329px] h-[45px] bg-[#f7f7f7] overflow-hidden">
                <div className="h-full flex items-center pl-1 mr-[-30px]">
                    {views.map((v) => (
                        <button key={v} type="button" aria-label={v} className="flex-1 flex justify-center">
                            <Icon name={v} big />
                        </button>
                    ))}
                </div>
            </div>
        </main>
    );
}

function Watermark() {
    return (
        <div className="absolute right-[5px] bottom-[5px] h-[62px] w-[206px] bg-white/40 flex items-center">
            <svg viewBox="0 0 60 62" className="w-[60px] h-[62px] shrink-0 opacity-60" fill="none" aria-hidden="true">
                <path d="M42 37C43 20 16 0 6 6C-2 12 8 38 36 38" stroke="#6f8796" strokeWidth="3" />
                <path d="M40 23C56 16 60 28 54 42C48 56 36 60 29 53" stroke="#cf4a4a" strokeWidth="4" />
                <path d="M33 33C18 32 6 40 12 47C17 52 28 46 35 43" stroke="#9aa4a0" strokeWidth="2" />
                <path d="M40 24C26 34 25 46 31 55" stroke="#9aa4a0" strokeWidth="1.500" />
            </svg>
            <div className="flex-1 flex flex-col items-end pr-1">
                <span className="text-[29px] leading-8 font-bold text-[#88c79f] mr-3.5">野火论坛</span>
                <a href="#" className="mt-1 font-['Noto_Sans',sans-serif] text-[15px] leading-5 text-[#bccad3]">www.proewildfire.cn</a>
            </div>
        </div>
    );
}

export default function App() {
    return (
        <div className="relative h-screen flex overflow-hidden bg-[#e3e3e3] font-['Noto_Sans_CJK_SC',sans-serif]">
            <svg className="absolute size-0" aria-hidden="true">
                <defs>
                    <radialGradient id="ballGrad" cx=".65" cy=".3" r=".8">
                        <stop offset="0" stopColor="#f4f4f4" />
                        <stop offset=".4" stopColor="#9a9a9a" />
                        <stop offset="1" stopColor="#1c1c1c" />
                    </radialGradient>
                    <radialGradient id="silverGrad" cx=".35" cy=".3" r=".8">
                        <stop offset="0" stopColor="#fff" />
                        <stop offset="1" stopColor="#7a7a7a" />
                    </radialGradient>
                </defs>
            </svg>
            <div className="w-[3px] shrink-0 bg-[#b7b9bb] flex flex-col justify-end">
                <div className="w-0.5 h-[260px] mb-[90px] bg-[#e8e8e8]" />
            </div>
            <div className="flex-1 min-w-0 flex flex-col">
                <header className="h-[34px] shrink-0 flex items-center">
                    <span className="ml-3 mb-1.5"><Icon name="cube" /></span>
                    <span className="ml-3 h-6 mb-1.5 w-px bg-[#b0b0b0]" />
                    <h1 className="mb-3.5 ml-auto mr-[315px] font-['Liberation_Mono','Noto_Sans_CJK_SC',monospace] text-xs text-[#b2b2b2]">
                        22 (活动的) - Creo Parametric 5.0
                    </h1>
                </header>
                <RibbonTabs />
                <Ribbon />
                <QuickBar />
                <div className="flex-1 min-h-0 flex">
                    <ModelTree />
                    <Viewport />
                </div>
                <footer className="h-[21px] shrink-0 pl-[93px] pt-[7px] flex items-start bg-[#eceef1] border-t-2 border-[#97989a] text-[11px] leading-3 text-[#555]">
                    <span className="[&>svg]:size-3"><Icon name="message" /></span>
                    <p className="ml-px whitespace-nowrap">从几何学角度看截面具有不稳定性。请尝试定义不同的尺寸组和约束组。</p>
                </footer>
            </div>
            <Watermark />
        </div>
    );
}
